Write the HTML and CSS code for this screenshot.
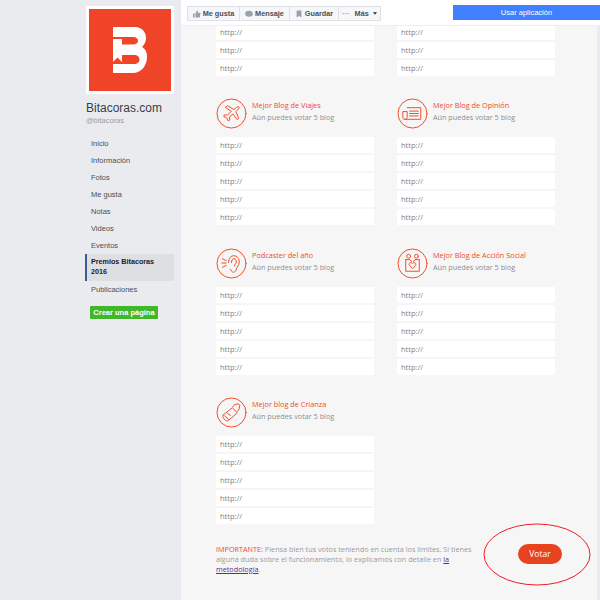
FILE: index.html
```html
<!DOCTYPE html>
<html lang="es">
<head>
<meta charset="utf-8">
<title>Bitacoras.com</title>
<link rel="stylesheet" href="styles.css">
</head>
<body>
<div class="page">
  <aside class="sidebar">
    <div class="logo">
      <svg viewBox="0 0 82 82" width="82" height="82">
        <rect width="82" height="82" fill="#f04428"/>
        <path fill="#fff" d="M24 18H46C53 18 57 23 57 29C57 33 55.5 35.5 53 38C56.5 40 58 43 58 48C58 57 52 64 44 64H24V55H45C48.5 55 50.5 53 50.5 50.5C50.5 48 48.5 46 45 46H33V53L28.5 48.5L24 53V30H33V35.5H44C47 35.5 49 34 49 31.7C49 29.5 47 28 44 28H24Z"/>
      </svg>
    </div>
    <h1 class="page-name">Bitacoras.com</h1>
    <div class="handle">@bitacoras</div>
    <nav class="nav">
      <a class="nav-item">Inicio</a>
      <a class="nav-item">Información</a>
      <a class="nav-item">Fotos</a>
      <a class="nav-item">Me gusta</a>
      <a class="nav-item">Notas</a>
      <a class="nav-item">Videos</a>
      <a class="nav-item">Eventos</a>
      <a class="nav-item active">Premios Bitacoras 2016</a>
      <a class="nav-item">Publicaciones</a>
    </nav>
    <button class="create">Crear una página</button>
  </aside>

  <main class="main">
    <header class="topbar">
      <div class="actions">
        <button class="action a1"><svg viewBox="0 0 10 10" width="8" height="8"><path fill="#9aa1ad" d="M0 4.5H2V9.5H0ZM3 4.5 5 .5H6V3.5H9.5L8.5 9.5H3Z"/></svg>Me gusta</button>
        <button class="action a2"><svg viewBox="0 0 10 10" width="8" height="8"><ellipse cx="5" cy="4.7" rx="4.8" ry="3.8" fill="#9aa1ad"/></svg>Mensaje</button>
        <button class="action a3"><svg viewBox="0 0 10 10" width="8" height="8"><path fill="#9aa1ad" d="M2 .5H8V9.5L5 7.5 2 9.5Z"/></svg>Guardar</button>
        <button class="action a4"><span class="dots">···</span>Más<span class="caret"></span></button>
      </div>
      <button class="use-app">Usar aplicación</button>
    </header>

    <div class="content">
      <div class="grid">
        <section class="group lead">
          <div class="field">http://</div><div class="field">http://</div><div class="field">http://</div>
        </section>
        <section class="group lead">
          <div class="field">http://</div><div class="field">http://</div><div class="field">http://</div>
        </section>

        <section class="group">
          <div class="head">
            <svg class="icon" viewBox="0 0 32 32"><circle cx="16" cy="16" r="15"/><path d="M10 9.5 12 8 18.5 12 21.5 9.5C23 8.5 24.5 9 23.5 11L20.5 14 23.5 21 22 22.5 17.5 16.5 14 19.5 14 23 12.5 23.5 11 20.5 8 19 8.5 17.5 12 17.5 15.5 14Z"/></svg>
            <div class="head-text"><div class="title">Mejor Blog de Viajes</div><div class="sub">Aún puedes votar 5 blog</div></div>
          </div>
          <div class="field">http://</div><div class="field">http://</div><div class="field">http://</div><div class="field">http://</div><div class="field">http://</div>
        </section>
        <section class="group">
          <div class="head">
            <svg class="icon" viewBox="0 0 32 32"><circle cx="16" cy="16" r="15"/><path d="M10.5 10H24.5V22H8C6.5 22 6 21 6 20V14H10.5V20C10.5 21 9.5 22 8 22M13 13.5H22M13 16H22M13 18.5H22"/></svg>
            <div class="head-text"><div class="title">Mejor Blog de Opinión</div><div class="sub">Aún puedes votar 5 blog</div></div>
          </div>
          <div class="field">http://</div><div class="field">http://</div><div class="field">http://</div><div class="field">http://</div><div class="field">http://</div>
        </section>

        <section class="group">
          <div class="head">
            <svg class="icon" viewBox="0 0 32 32"><circle cx="16" cy="16" r="15"/><path d="M13 15C13 10 15.5 8 18.5 8S24 10.5 24 14.5C24 18 21.5 19 21 21.5S19.5 25 18 25 15.5 23.5 15 22M16 15C16 12.5 17 11 18.5 11S21 12.5 21 14.5 19 16.5 19 18.5M6.5 11 10.5 13M6 15.5H10.5M6.5 20 10.5 18"/></svg>
            <div class="head-text"><div class="title">Podcaster del año</div><div class="sub">Aún puedes votar 5 blog</div></div>
          </div>
          <div class="field">http://</div><div class="field">http://</div><div class="field">http://</div><div class="field">http://</div><div class="field">http://</div>
        </section>
        <section class="group">
          <div class="head">
            <svg class="icon" viewBox="0 0 32 32"><circle cx="16" cy="16" r="15"/><circle cx="12" cy="8.5" r="2"/><circle cx="20" cy="8.5" r="2"/><path d="M9 12H13.5L15 14M23 12H18.5L17 14M9 12V24H23V12M16 21 12.8 17.8C11.5 15.5 14.5 14 16 16 17.5 14 20.5 15.5 19.2 17.8Z"/></svg>
            <div class="head-text"><div class="title">Mejor Blog de Acción Social</div><div class="sub">Aún puedes votar 5 blog</div></div>
          </div>
          <div class="field">http://</div><div class="field">http://</div><div class="field">http://</div><div class="field">http://</div><div class="field">http://</div>
        </section>

        <section class="group">
          <div class="head">
            <svg class="icon" viewBox="0 0 32 32"><circle cx="16" cy="16" r="15"/><path d="M7.5 18.5 17 11 22 16.5 13 24C11.5 25 10 24.5 9 23.5L7.5 21.5C7 20.5 7 19.5 7.5 18.5ZM17.5 10 19 8 23 7 24.5 8.5 24 12 22.5 14.5M9 19.5 13 23M12 17 15 19"/></svg>
            <div class="head-text"><div class="title">Mejor blog de Crianza</div><div class="sub">Aún puedes votar 5 blog</div></div>
          </div>
          <div class="field">http://</div><div class="field">http://</div><div class="field">http://</div><div class="field">http://</div><div class="field">http://</div>
        </section>
      </div>

      <div class="footer">
        <p class="note"><span class="important">IMPORTANTE:</span> Piensa bien tus votos teniendo en cuenta los límites. Si tienes alguna duda sobre el funcionamiento, lo explicamos con detalle en <a class="link">la metodología</a>.</p>
        <div class="vote-wrap">
          <button class="vote">Votar</button>
          <svg class="ring" viewBox="0 0 108 63" width="108" height="63"><ellipse cx="54" cy="31.5" rx="53" ry="30.5"/></svg>
        </div>
      </div>
    </div>
  </main>
</div>
</body>
</html>
```

FILE: styles.css
```css
* { box-sizing: border-box; }
html, body { margin: 0; height: 600px; overflow: hidden; }
body { background: #e9ebee; font-family: "Liberation Sans", Arial, sans-serif; }
button { font-family: inherit; border: 0; padding: 0; margin: 0; }

.page { display: flex; height: 600px; }

.sidebar { width: 181px; flex: none; padding: 6px 7px 0 85px; background: #e9ebee; }
.logo { width: 88px; height: 88px; margin-left: 1px; padding: 3px; background: #fff; }
.logo svg { display: block; }
.page-name { margin: 6px 0 0 1px; font-size: 12px; line-height: 16px; font-weight: 400; color: #3a3d44; }
.handle { margin: 0 0 0 1px; font-size: 7.5px; line-height: 9px; color: #9a9ea7; }
.nav { margin-top: 10px; display: flex; flex-direction: column; }
.nav-item { display: block; height: 17px; padding: 3px 4px 3px 6px; font-size: 7.5px; line-height: 11px; color: #4b4f56; }
.nav-item.active { width: 89px; height: 27px; padding: 3px 4px 2px 4px; line-height: 10px; font-size: 7.2px; background: #dddfe3; border-left: 2px solid #3b5998; font-weight: 700; color: #1d2129; }
.create { display: block; margin: 8px 0 0 5px; width: 68px; height: 13px; background: #42b72a; color: #fff; font-size: 7.5px; font-weight: 700; border-radius: 1px; }

.main { flex: 1; min-width: 0; background: #f6f6f6; border-right: 3px solid #e9ebee; }
.topbar { position: relative; z-index: 2; display: flex; justify-content: space-between; align-items: flex-start; height: 26px; padding: 5px 0 0 6px; margin-right: -3px; background: #fff; border-bottom: 1px solid #eceef1; }
.actions { display: flex; height: 15px; margin-top: 1px; border: 1px solid #dfe1e6; background: #f6f7f9; }
.action { display: flex; align-items: center; justify-content: center; gap: 2px; height: 13px; background: #f6f7f9; font-size: 7.3px; font-weight: 700; color: #4b4f56; border-right: 1px solid #dfe1e6; }
.action:last-child { border-right: 0; }
.a1 { width: 52px; }
.a2 { width: 50px; }
.a3 { width: 49px; }
.a4 { width: 41px; }
.dots { color: #9aa1ad; margin-right: 3px; }
.caret { width: 0; height: 0; margin-left: 2px; border: 2px solid transparent; border-top: 3px solid #4b4f56; border-bottom: 0; }
.use-app { width: 147px; height: 15px; background: #4080ff; color: #fff; font-size: 7.5px; }

.content { margin-top: -2px; padding-left: 35px; font-family: "Open Sans", sans-serif; }
.grid { display: grid; grid-template-columns: 158px 158px; column-gap: 23px; }
.group { height: 149.5px; }
.group.lead { height: 53px; }
.head { display: flex; gap: 5px; height: 60px; padding-top: 21px; }
.icon { width: 31px; height: 31px; flex: none; fill: none; stroke: #ee4a28; stroke-width: 1; stroke-linejoin: round; stroke-linecap: round; }
.head-text { padding-top: 2px; }
.title { font-size: 7.3px; line-height: 11px; color: #f0492b; }
.sub { font-size: 7.25px; line-height: 12px; color: #8d8f92; }
.field { height: 16px; margin-bottom: 2px; padding-left: 4px; background: #fff; font-size: 7.5px; line-height: 16px; color: #7d7f82; }

.footer { display: flex; margin-top: 18px; }
.note { flex: none; width: 256px; margin: 0; font-size: 7.25px; line-height: 10px; color: #9b9b9b; }
.important { color: #f0492b; }
.link { color: #54308f; text-decoration: underline; }
.vote-wrap { position: relative; }
.vote { position: absolute; left: 46px; top: 0; width: 44px; height: 20px; border-radius: 10px; background: #e8431f; color: #fff; font-family: "Open Sans", sans-serif; font-size: 8.5px; }
.ring { position: absolute; left: 11px; top: -21px; fill: none; stroke: #ee1c25; stroke-width: 1; }
```
